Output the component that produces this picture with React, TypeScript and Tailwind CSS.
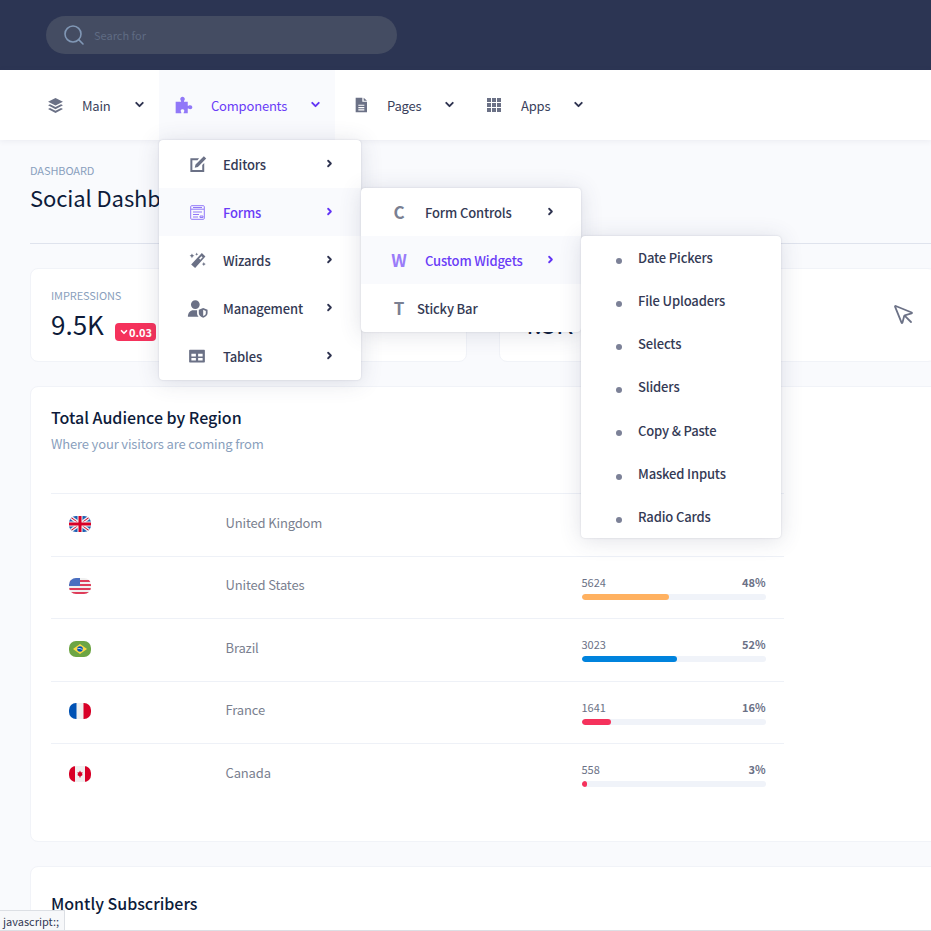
import React from "react";
import { ChevronDown, ChevronRight, Search, MousePointer } from "lucide-react";

const Solid = ({ d, size = 18, color = "#6b7186", vb = 24 }: { d: string; size?: number; color?: string; vb?: number }) => (
  <svg width={size} height={size} viewBox={`0 0 ${vb} ${vb}`} fill={color} className="shrink-0"><path d={d} /></svg>
);

const icons = {
  layers: "M12 1.5 22.5 6.8 12 12 1.5 6.8ZM4.2 10.2 12 14l7.8-3.8 2.7 1.6L12 17.2 1.5 11.800ZM4.200 15.400 12 19.300l7.800-3.900 2.700 1.500L12 22.500 1.500 16.900Z",
  puzzle: "M2 8h6.500c.3-.9-1-1.600-1-3.200C7.500 3.300 8.700 2 10.200 2s2.800 1.300 2.800 2.800c0 1.600-1.300 2.300-1 3.200H16.500v5c.9.300 1.300-.7 2.900-.7 1.500 0 2.600 1 2.600 2.400S20.900 17.100 19.400 17.100c-1.600 0-2-1-2.900-.7V22H11.500c-.3-1 .9-1.500.9-3 0-1.300-1-2-2.200-2s-2.200.7-2.200 2c0 1.500 1.200 2 .9 3H2Z",
  file: "M4 1h10v6h7v16H4ZM16 1l5 4.500H16ZM8 11.500v1.800h9v-1.800ZM8 15v1.800h9V15ZM8 18.500v1.800h9v-1.800Z",
};

const Grid9 = () => (
  <div className="grid grid-cols-3 gap-[1.5px] w-[14px] h-[14px] shrink-0">
    {Array.from({ length: 9 }).map((_, i) => <span key={i} className="bg-[#6b7186]" />)}
  </div>
);

const Top = ({ icon, label, active, w, iconGap }: { icon: React.ReactNode; label: string; active?: boolean; w: string; iconGap: string }) => (
  <div className={`flex items-center h-full ${w} ${active ? "bg-[#f9fafd]" : ""}`}>
    {icon}
    <span className={`text-[13px] tracking-[-0.2px] mt-[1px] ${iconGap} ${active ? "text-[#6a3cf7]" : "text-[#3a3f5c]"}`}>{label}</span>
    <ChevronDown size={13} strokeWidth={3.5} color={active ? "#6234f5" : "#2e3350"} className="ml-[22px] -mt-[2px] shrink-0" />
  </div>
);

const MenuRow = ({ icon, label, active }: { icon: React.ReactNode; label: string; active?: boolean }) => (
  <div className={`flex items-center h-12 relative ${active ? "bg-[#f9fafd]" : ""}`}>
    <div className="w-[64px] pl-[20px] shrink-0"><div className="w-[36px] flex justify-center">{icon}</div></div>
    <span className={`text-[13px] tracking-[-0.15px] font-medium mt-[1px] ${active ? "text-[#6a3cf7]" : "text-[#343a55]"}`}>{label}</span>
    <ChevronRight size={11} strokeWidth={4} color={active ? "#6234f5" : "#2e3350"} className="absolute left-[165px] top-[18px]" />
  </div>
);

const Letter = ({ c, active }: { c: string; active?: boolean }) => (
  <span className={`font-bold text-[17px] w-[18px] text-center ${active ? "text-[#9a7cf9]" : "text-[#7a7f92]"}`}>{c}</span>
);

const L3 = ({ label }: { label: string }) => (
  <div className="flex items-center h-[43.200px]">
    <span className="w-[6px] h-[6px] rounded-full bg-[#7c8197] ml-[35px] mr-[18px] mt-[6px] shrink-0" />
    <span className="text-[13px] tracking-[-0.15px] font-medium text-[#343a55] -ml-[2px]">{label}</span>
  </div>
);

const Flag = ({ children }: { children: React.ReactNode }) => (
  <svg width="22" height="16" viewBox="0 0 22 16" className="rounded-[7px]">{children}</svg>
);

const flags = {
  uk: (
    <Flag>
      <rect width="22" height="16" fill="#1f5fb3" />
      <path d="M0 0 22 16M22 0 0 16" stroke="#f0f0f0" strokeWidth="3.500" />
      <path d="M0 0 22 16M22 0 0 16" stroke="#d80027" strokeWidth="1" />
      <path d="M11 0v16M0 8h22" stroke="#f0f0f0" strokeWidth="5" />
      <path d="M11 0v16M0 8h22" stroke="#d80027" strokeWidth="3" />
    </Flag>
  ),
  us: (
    <Flag>
      <rect width="22" height="16" fill="#f0f0f0" />
      <path d="M0 3h22M0 7h22M0 11h22M0 15h22" stroke="#d80027" strokeWidth="1.600" />
      <rect width="11" height="8" fill="#4a6fc0" />
    </Flag>
  ),
  br: (
    <Flag>
      <rect width="22" height="16" fill="#6da544" />
      <path d="M11 3 18 8 11 13 4 8Z" fill="#ffda44" />
      <circle cx="11" cy="8" r="2.800" fill="#0052b4" />
      <path d="M8.500 7.500c2-.3 3.700.2 5 1.300" stroke="#f0f0f0" strokeWidth=".8" fill="none" />
    </Flag>
  ),
  fr: (
    <Flag>
      <rect width="22" height="16" fill="#f0f0f0" />
      <rect width="7.500" height="16" fill="#0052b4" />
      <rect x="14.500" width="7.500" height="16" fill="#d80027" />
    </Flag>
  ),
  ca: (
    <Flag>
      <rect width="22" height="16" fill="#f0f0f0" />
      <rect width="6" height="16" fill="#d80027" />
      <rect x="16" width="6" height="16" fill="#d80027" />
      <path d="M11 4.500 12 6.500l1.500-.5-.5 2.500 1 .3-2.500 1.700v1h-1v-1L8 8.800l1-.3L8.500 6l1.500.5Z" fill="#d80027" />
    </Flag>
  ),
};

const rows: [React.ReactNode, string, string, string, number, string][] = [
  [flags.uk, "United Kingdom", "", "", 0, ""],
  [flags.us, "United States", "5624", "48%", 47.500, "bg-[#ffb160]"],
  [flags.br, "Brazil", "3023", "52%", 51.700, "bg-[#0083dd]"],
  [flags.fr, "France", "1641", "16%", 16, "bg-[#f5325c]"],
  [flags.ca, "Canada", "558", "3%", 3, "bg-[#f5325c]"],
];

const menuShadow = "shadow-[0_0_2px_rgba(60,70,100,0.2),0_2px_22px_rgba(60,70,100,0.16)]";

export default function App() {
  return (
    <div className="relative w-[931px] h-[931px] overflow-hidden bg-[#f9fafd]" style={{ fontFamily: '"Noto Sans CJK SC", "Noto Sans", sans-serif' }}>
      <header className="h-[70px] bg-[#2c3553] flex items-center pl-[46px]">
        <div className="w-[351px] h-[38px] rounded-full bg-[#444c62] flex items-center pl-[16px]">
          <Search size={24} strokeWidth={1.600} color="#8097b5" />
          <span className="text-[11px] text-[#5f6b82] ml-[8px]">Search for</span>
        </div>
      </header>

      <nav className="h-[70px] bg-white flex items-center shadow-[0_1px_6px_rgba(60,70,100,0.08)] relative">
        <div className="w-[47px] shrink-0" />
        <Top w="w-[112px]" iconGap="ml-[18px]" label="Main" icon={<Solid d={icons.layers} size={17} />} />
        <Top active w="w-[176px] pl-[15px]" iconGap="ml-[17px]" label="Components" icon={<Solid d={icons.puzzle} size={20} color="#9178f8" />} />
        <div className="w-[18px] shrink-0" />
        <Top w="w-[134px]" iconGap="ml-[18px]" label="Pages" icon={<Solid d={icons.file} size={16} />} />
        <Top w="w-[120px]" iconGap="ml-[20px]" label="Apps" icon={<Grid9 />} />
      </nav>

      <main className="pl-[30px] w-[1000px]">
        <div className="pt-[23px] h-[104px] border-b border-[#dfe3ed]">
          <div className="text-[11px] tracking-[-0.1px] leading-[14px] text-[#8a9fbd]">DASHBOARD</div>
          <h1 className="text-[22px] tracking-[-0.1px] leading-[32px] mt-[4px] text-[#0d1b3a]">Social Dashboard</h1>
        </div>

        <div className="flex gap-[32px] mt-[24px]">
          <div className="w-[437px] h-[94px] bg-white rounded-[8px] border border-[#f1f3f8] pl-[20px] pt-[19px]">
            <div className="text-[11px] tracking-[-0.1px] leading-[14px] text-[#8a9fbd]">IMPRESSIONS</div>
            <div className="flex items-center mt-[5px]">
              <span className="text-[26px] leading-[34px] text-[#0d1b3a]">9.5K</span>
              <span className="ml-[11px] mt-[16px] h-[18px] rounded-[4px] bg-[#f5325c] text-white text-[11px] font-bold flex items-center px-[4px]">
                <ChevronDown size={10} strokeWidth={4} />0.03
              </span>
            </div>
          </div>
          <div className="w-[437px] h-[94px] bg-white rounded-[8px] border border-[#f1f3f8] pl-[20px] pt-[37px] flex">
            <span className="text-[26px] leading-[34px] text-[#0d1b3a] w-[372px]">4.5K</span>
            <MousePointer size={24} strokeWidth={1.800} color="#6b7186" className="-mt-[3px] shrink-0" />
          </div>
        </div>

        <section className="mt-[24px] w-[970px] h-[456px] bg-white rounded-[8px] border border-[#f1f3f8] pt-[18px]">
          <div className="pl-[20px]">
            <h2 className="text-[16px] leading-[24px] font-medium text-[#0d1b3a]">Total Audience by Region</h2>
            <p className="text-[13px] tracking-[-0.15px] leading-[20px] mt-[5px] text-[#8a9fbd]">Where your visitors are coming from</p>
          </div>
          <div className="ml-[20px] w-[733px] mt-[39px]">
            {rows.map(([flag, name, n, pct, w, color], i) => (
              <div key={i} className="h-[62.500px] border-t border-[#eef1f7] flex items-center">
                <div className="w-[174.500px] pl-[18px] flex -mt-[2px]">{flag}</div>
                <div className="w-[356px] text-[13px] tracking-[-0.15px] -mt-[5px] text-[#7a7f8f]">{name}</div>
                {n && (
                  <div className="w-[184px]">
                    <div className="flex justify-between text-[11px] leading-[14px] text-[#6b7186]">
                      <span>{n}</span><span className="font-bold">{pct}</span>
                    </div>
                    <div className="h-[6px] mt-[5px] rounded-full bg-[#f0f3f9] overflow-hidden">
                      <div className={`h-full rounded-full ${color}`} style={{ width: `${Math.max(w, 3)}%` }} />
                    </div>
                  </div>
                )}
              </div>
            ))}
          </div>
        </section>

        <section className="mt-[24px] w-[970px] h-[200px] bg-white rounded-[8px] border border-[#f1f3f8] pl-[20px] pt-[24px]">
          <h2 className="text-[16px] leading-[24px] font-medium text-[#0d1b3a]">Montly Subscribers</h2>
        </section>
      </main>

      {/* Level 1 dropdown */}
      <div className={`absolute left-[159px] top-[140px] w-[202px] bg-white rounded-[4px] ${menuShadow}`}>
        <MenuRow label="Editors" icon={<Solid d="M3 4h11l-2 2.500H5.500v12.500H18v-6.500l2.500-2.500V21.500H3ZM20 1.500l3 3-10.500 10.500-4 1 1-4Z" size={19} />} />
        <MenuRow active label="Forms" icon={
          <svg width="15" height="15" viewBox="0 0 15 15" fill="none" stroke="#9178f8" strokeWidth="1" className="shrink-0"><rect x=".7" y=".7" width="13.600" height="13.600" rx="1" /><path d="M1 4.200h13M3 2.500h9M3 7h9M3 9.500h6M3 12h5M10 11h3v1.500h-3z" /></svg>
        } />
        <MenuRow label="Wizards" icon={<Solid d="M17.500 2.500 22 7 9 21.500 4 17ZM17 6.500l-3 3 1.500 1.500 3-3ZM5 3l1 2 2 1-2 1-1 2-1-2-2-1 2-1ZM20 14l.8 1.700 1.700.8-1.700.8-.8 1.700-.8-1.700-1.700-.8 1.700-.8ZM11 2l.6 1.400L13 4l-1.400.6L11 6l-.6-1.400L9 4l1.400-.6Z" size={19} />} />
        <MenuRow label="Management" icon={
          <svg width="21" height="21" viewBox="0 0 24 24" fill="#6b7186" className="shrink-0">
            <path d="M9.500 2.500a5 5 0 1 1 0 10 5 5 0 0 1 0-10ZM1 21.500c0-5 3-7.500 6-7.500h4.500v3.500c0 1.500.7 2.900 1.800 4Z" />
            <path d="M18.500 11.500l5 2v4c0 2.500-2.500 4.500-5 5-2.500-.5-5-2.500-5-5v-4ZM18.500 13.500v7c1.700-.5 3-1.700 3-3.200v-2.500Z" fillRule="evenodd" />
          </svg>
        } />
        <MenuRow label="Tables" icon={<Solid d="M2.500 3.500h19a1 1 0 0 1 1 1v15a1 1 0 0 1-1 1h-19a1 1 0 0 1-1-1v-15a1 1 0 0 1 1-1ZM4.500 9v3.500h6V9Zm9 0v3.500h6V9Zm-9 5.500V18h6v-3.500Zm9 0V18h6v-3.500Z" size={18} />} />
      </div>

      {/* Level 2 dropdown */}
      <div className={`absolute left-[361px] top-[188px] w-[220px] bg-white rounded-[4px] ${menuShadow}`}>
        <div className="flex items-center h-12 relative pl-[29px]">
          <Letter c="C" /><span className="text-[13px] tracking-[-0.15px] font-medium mt-[1px] text-[#343a55] ml-[17px]">Form Controls</span>
          <ChevronRight size={11} strokeWidth={4} color="#2e3350" className="absolute left-[184px] top-[18px]" />
        </div>
        <div className="flex items-center h-12 relative pl-[29px] bg-[#f9fafd]">
          <Letter c="W" active /><span className="text-[13px] tracking-[-0.15px] font-medium mt-[1px] text-[#6a3cf7] ml-[17px]">Custom Widgets</span>
          <ChevronRight size={11} strokeWidth={4} color="#6234f5" className="absolute left-[184px] top-[18px]" />
        </div>
        <div className="flex items-center h-12 relative pl-[29px]">
          <Letter c="T" /><span className="text-[13px] tracking-[-0.15px] font-medium mt-[1px] text-[#343a55] ml-[9px]">Sticky Bar</span>
        </div>
      </div>

      {/* Level 3 dropdown */}
      <div className={`absolute left-[581px] top-[236px] w-[200px] h-[302px] bg-white rounded-[4px] ${menuShadow}`}>
        {["Date Pickers", "File Uploaders", "Selects", "Sliders", "Copy & Paste", "Masked Inputs", "Radio Cards"].map((l) => <L3 key={l} label={l} />)}
      </div>

      {/* Browser status bubble */}
      <div className="absolute left-0 bottom-0 h-[21px] w-[65px] bg-[#f7f8fa] border-t border-r border-[#dcdfe4] text-[11px] leading-[20px] text-[#343a55] pl-[3px]">javascript:;</div>
      <div className="absolute left-0 right-0 bottom-0 h-[1px] bg-[#dcdfe4]" />
    </div>
  );
}
